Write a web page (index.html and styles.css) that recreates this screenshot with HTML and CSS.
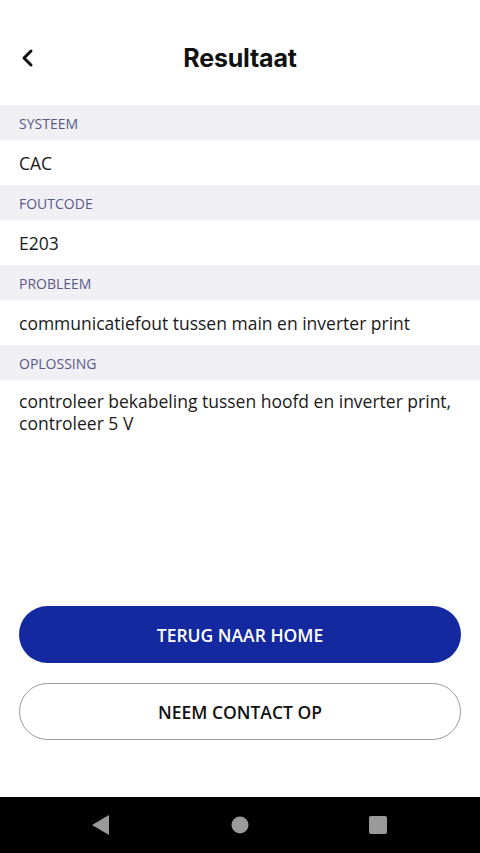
FILE: index.html
```html
<!DOCTYPE html>
<html lang="nl">
<head>
<meta charset="utf-8">
<link rel="stylesheet" href="styles.css">
</head>
<body>
<div class="screen">
  <header class="topbar">
    <button class="back" aria-label="Terug">
      <svg width="16" height="20" viewBox="0 0 16 20"><path d="M11 3 L4 10 L11 17" fill="none" stroke="#111" stroke-width="3" stroke-linecap="round" stroke-linejoin="round"/></svg>
    </button>
    <h1 class="title">Resultaat</h1>
  </header>
  <main class="content">
    <div class="label">SYSTEEM</div>
    <div class="value">CAC</div>
    <div class="label">FOUTCODE</div>
    <div class="value">E203</div>
    <div class="label">PROBLEEM</div>
    <div class="value">communicatiefout tussen main en inverter print</div>
    <div class="label">OPLOSSING</div>
    <div class="value multi">controleer bekabeling tussen hoofd en inverter print, controleer 5 V</div>
  </main>
  <div class="actions">
    <button class="btn primary">TERUG NAAR HOME</button>
    <button class="btn outline">NEEM CONTACT OP</button>
  </div>
  <nav class="navbar">
    <svg width="18" height="20" viewBox="0 0 18 20"><path d="M17 0 L17 20 L0 10 Z" fill="#9a9a9a"/></svg>
    <svg width="18" height="18" viewBox="0 0 18 18"><circle cx="9" cy="9" r="8.5" fill="#9a9a9a"/></svg>
    <svg width="18" height="18" viewBox="0 0 18 18"><rect x="0" y="0" width="18" height="18" rx="2" fill="#9a9a9a"/></svg>
  </nav>
</div>
</body>
</html>
```
FILE: styles.css
```css
* { box-sizing: border-box; }
html, body { margin: 0; padding: 0; background: #fff; }
.screen {
  width: 480px;
  height: 853px;
  display: flex;
  flex-direction: column;
  font-family: "Open Sans", "Noto Sans", sans-serif;
  color: #1a1a1a;
}
.topbar {
  height: 105px;
  display: grid;
  grid-template-columns: 60px 1fr 60px;
  align-items: center;
  padding-top: 10px;
}
.back {
  border: 0;
  background: none;
  padding: 0 0 0 20px;
  display: flex;
  align-items: center;
  height: 20px;
}
.title {
  margin: 0;
  text-align: center;
  font-family: "Inter", "Liberation Sans", sans-serif;
  font-weight: 700;
  font-size: 25px;
  letter-spacing: -0.2px;
  color: #111;
}
.content { display: flex; flex-direction: column; }
.label {
  height: 35px;
  background: #efeff4;
  color: #5a5a88;
  font-size: 14px;
  padding: 0 19px;
  display: flex;
  align-items: center;
  padding-top: 2px;
}
.value {
  height: 45px;
  padding: 0 19px;
  display: flex;
  align-items: center;
  font-size: 17.5px;
  color: #1a1a1a;
}
.value.multi {
  height: auto;
  display: block;
  padding-top: 10px;
  line-height: 22px;
}
.actions {
  margin-top: auto;
  padding: 0 19px 57px;
  display: flex;
  flex-direction: column;
  gap: 20px;
}
.btn {
  height: 57px;
  border-radius: 29px;
  font-family: "Open Sans", "Noto Sans", sans-serif;
  font-size: 17.5px;
  font-weight: 600;
  letter-spacing: 0;
}
.primary {
  background: #1428a0;
  color: #fff;
  border: 0;
}
.outline {
  background: #fff;
  color: #111;
  border: 1px solid #9a9a9a;
}
.navbar {
  height: 56px;
  background: #000;
  display: flex;
  align-items: center;
  justify-content: space-between;
  padding: 0 93px 0 92px;
  flex-shrink: 0;
}
```
